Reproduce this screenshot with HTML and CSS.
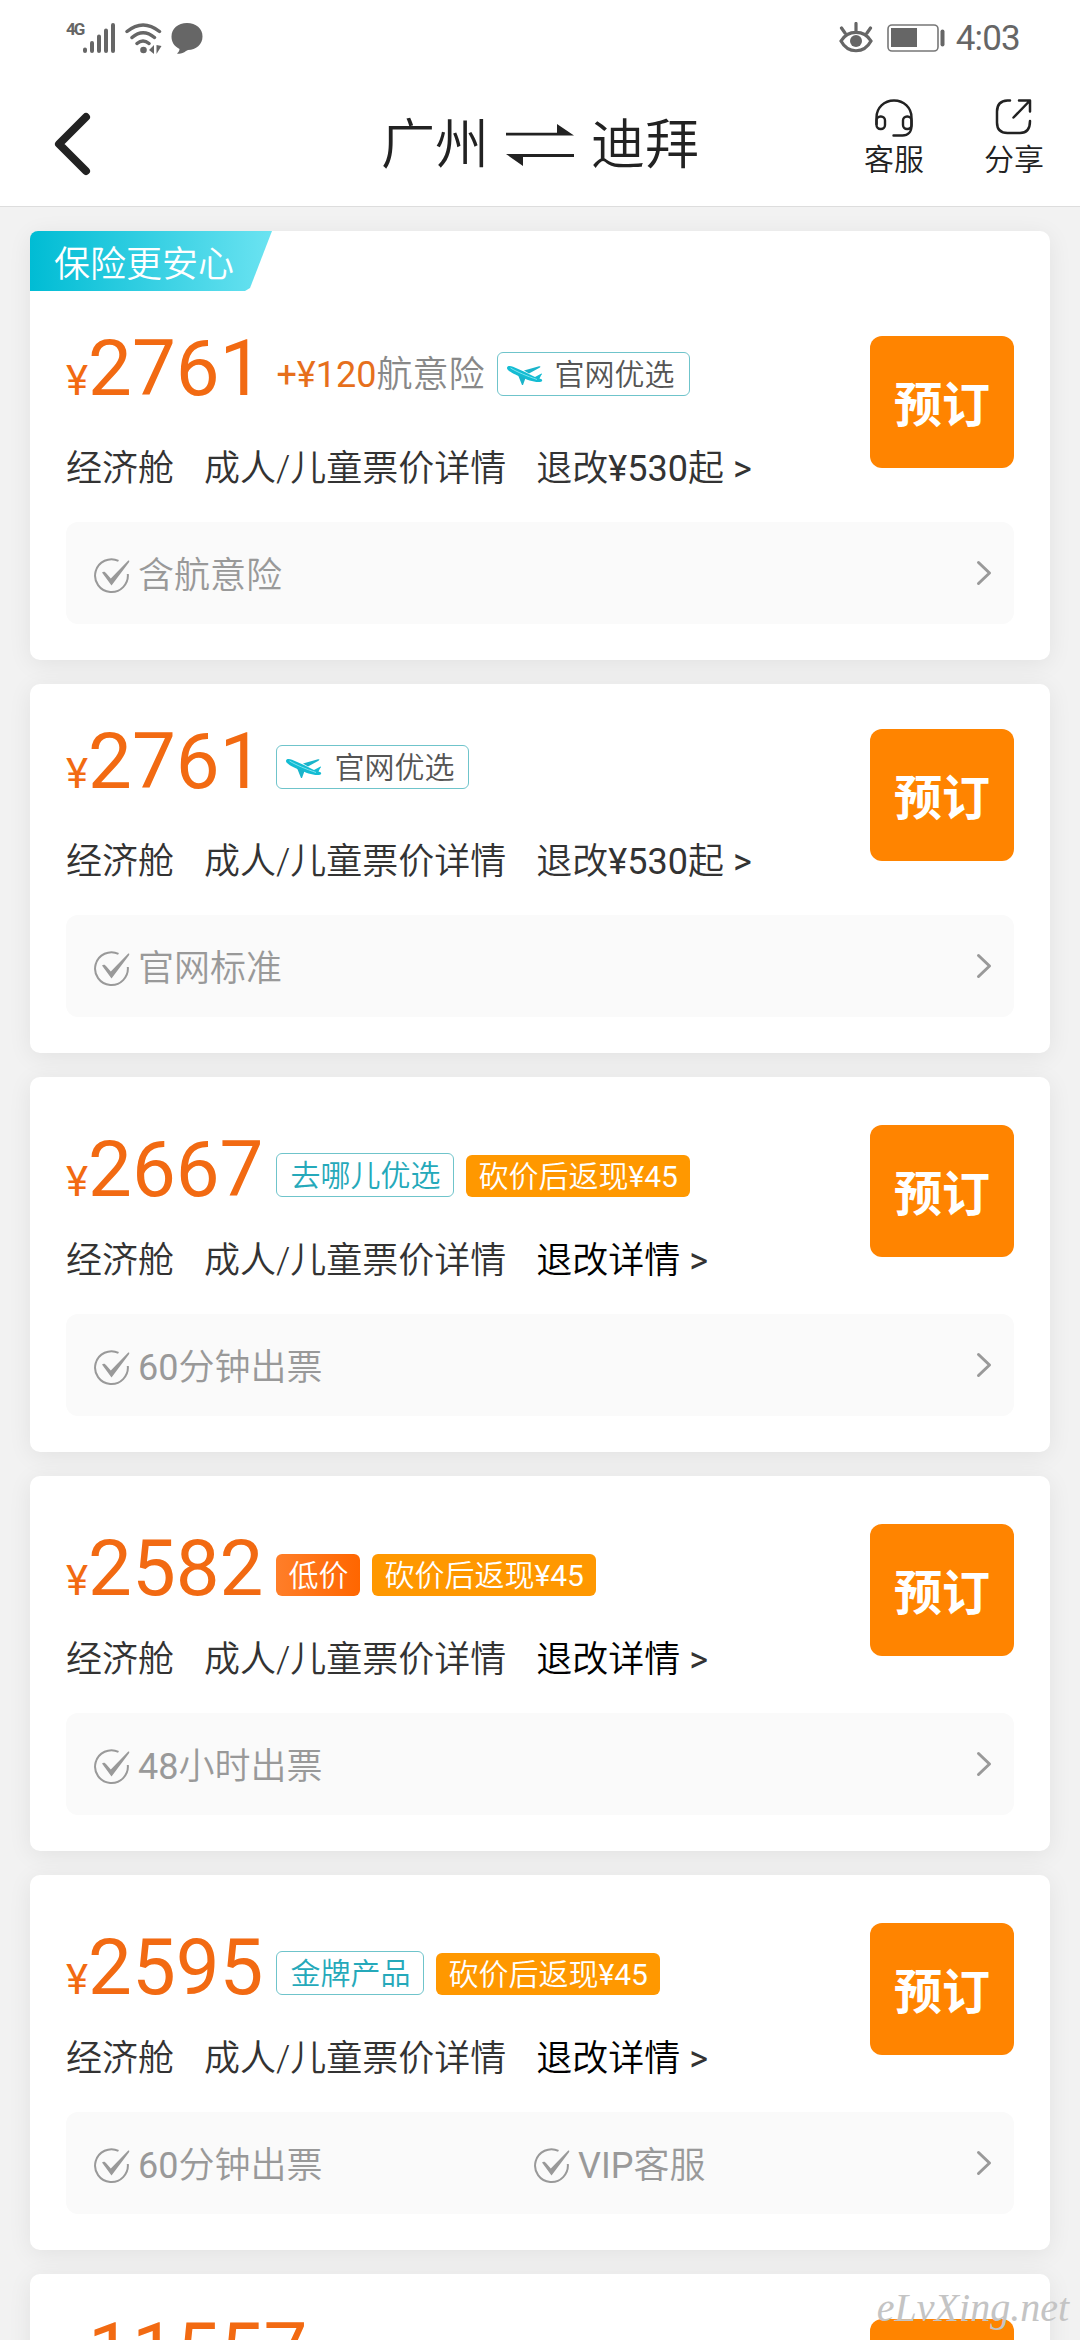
FILE: index.html
```html
<!DOCTYPE html>
<html lang="zh-CN">
  <head>
    <meta charset="UTF-8" />
    <meta name="viewport" content="width=device-width, initial-scale=1.0" />
    <title>广州 - 迪拜</title>
    <link rel="stylesheet" href="styles.css">
  </head>
  <body>
    <svg class="sprite" width="0" height="0">
      <symbol id="check" viewBox="0 0 36 36">
        <path d="M24.5 2.8A16.4 16.4 0 1 0 33.8 16" fill="none" stroke="currentColor" stroke-width="2" />
        <path d="M8 14.5c2-1.500 3.200-.5 4.200.8l4.600 5.200L34 2.700c1.200-.4 1.700.3 1 1.500L17.500 27.500z" fill="currentColor" />
      </symbol>
      <symbol id="next" viewBox="0 0 16 26">
        <path d="M2.500 2.500 13.500 13 2.500 23.500" fill="none" stroke="currentColor" stroke-width="3" stroke-linecap="round" stroke-linejoin="round" />
      </symbol>
      <symbol id="plane" viewBox="0 0 36 21">
        <path d="M0 3C0 .8 3 .6 6 1.800L18 7l10 5 6.500-3.500c1 .4.500 1-.5 2l-1.500 3 2 .8c1.200 1 .8 1.800-.5 2.500-6 1-14-2-20-4.800C8 9.500 0 6 0 3z" fill="#14bcd3" />
        <path d="M17 5.500 32 1.200c2-.3 1.800.8.5 1.500L22 8.500zM11 10l7.500 3-2.500 7h-1z" fill="#1ab4ca" />
        <path d="M3.500 3C10 7 20 11 30 14.500" fill="none" stroke="#7be3ef" stroke-width="1" />
      </symbol>
    </svg>

    <header class="header">
      <div class="status-bar">
        <div class="status-left">
          <span class="network">4G</span>
          <svg class="signal" width="32" height="30" viewBox="0 0 32 30">
            <path d="M2 26.500v1.500M9 20v8M16 13.500V28M23 7.500V28M30 2v26" stroke="#666" stroke-width="4" stroke-linecap="round" />
          </svg>
          <svg class="wifi" width="37" height="31" viewBox="0 0 37 31">
            <g fill="none" stroke="#666" stroke-width="3.500" stroke-linecap="round">
              <path d="M2 8.500Q18 -4.500 34.500 8.500M7 14.500Q18 5 29.500 14.500M12 20.500Q18 15.500 24 20.500" />
            </g>
            <circle cx="18.500" cy="27" r="3.300" fill="#666" />
            <path d="M24 27l5-5v9zM31.500 22v9l5-8z" fill="#666" />
          </svg>
          <svg class="bubble" width="32" height="31" viewBox="0 0 32 31">
            <path d="M16 0C25 0 31.500 5.500 31.500 13.500S25 27 17 27l-2 1c-3 2.500-6 3-9 2.500 1.500-1 2.500-3 2.500-4.500C3 23 .5 19 .5 13.500.5 5.500 7 0 16 0z" fill="#666" />
          </svg>
        </div>
        <div class="status-right">
          <svg width="34" height="32" viewBox="0 0 34 32">
            <path d="M2 19C9 7.500 25 7.500 32 19 25 32 9 32 2 19zM17 9V1.500M6 11 2.500 6M28 11l3.500-5" fill="none" stroke="#666" stroke-width="3.200" stroke-linecap="round" />
            <circle cx="17" cy="19" r="6" fill="#666" />
          </svg>
          <svg class="battery" width="58" height="28" viewBox="0 0 58 28">
            <rect x="1" y="1" width="50" height="26" rx="4" fill="none" stroke="#777" stroke-width="1.600" />
            <path d="M4 4h26v19H4z" fill="#666" />
            <rect x="53.500" y="5.500" width="4" height="17" rx="2" fill="#666" />
          </svg>
          <span class="time">4:03</span>
        </div>
      </div>

      <div class="nav-bar">
        <svg class="back" width="38" height="64" viewBox="0 0 38 64">
          <path d="M33 5 6 32l27 27" fill="none" stroke="#222" stroke-width="8" stroke-linecap="round" stroke-linejoin="round" />
        </svg>
        <h1 class="title">
          <span>广州</span>
          <svg width="68" height="42" viewBox="0 0 68 42">
            <path d="M0 8.700h51V0l17 11.500H0zM68 33H17v9L0 30h68z" fill="#222" />
          </svg>
          <span>迪拜</span>
        </h1>
        <div class="actions">
          <div class="action">
            <svg width="38" height="38" viewBox="0 0 38 38">
              <g fill="none" stroke="#222" stroke-width="2.400" stroke-linecap="round">
                <path d="M1.500 25v-6.500C1.500 9 9 1.500 19 1.500S36.500 9 36.500 18.500V27c0 6-3.500 9.500-9 9.500h-9" />
                <rect x="1.500" y="17.500" width="8.500" height="12.500" rx="4" />
                <rect x="28" y="17.500" width="8.500" height="12.500" rx="4" />
              </g>
            </svg>
            <span>客服</span>
          </div>
          <div class="action">
            <svg width="38" height="38" viewBox="0 0 38 38">
              <path d="M15 1.500h-2.500Q2 2 2 12.500v11Q2 34 12.500 34H25q10 0 10-12M24 1.500h11v11M34.500 2 18.500 18.500" fill="none" stroke="#222" stroke-width="2.500" stroke-linecap="round" stroke-linejoin="round" />
            </svg>
            <span>分享</span>
          </div>
        </div>
      </div>
    </header>

    <main class="list">
      <section class="card">
        <div class="ribbon">保险更安心</div>
        <div class="card-body">
          <div class="offer">
            <div class="info">
              <div class="price-row">
                <div class="price"><small>¥</small>2761</div>
                <div class="extra"><b>+¥120</b>航意险</div>
                <span class="tag tag-official"><svg width="36" height="21"><use href="#plane" /></svg>官网优选</span>
              </div>
              <div class="detail"><span>经济舱</span><span>成人/儿童票价详情</span><span>退改<i>¥530</i>起<i> &gt;</i></span></div>
            </div>
            <button class="book">预订</button>
          </div>
          <div class="features">
            <div class="feature"><svg width="36" height="36"><use href="#check" /></svg>含航意险</div>
            <svg class="next" width="16" height="26"><use href="#next" /></svg>
          </div>
        </div>
      </section>

      <section class="card">
        <div class="card-body">
          <div class="offer">
            <div class="info">
              <div class="price-row">
                <div class="price"><small>¥</small>2761</div>
                <span class="tag tag-official"><svg width="36" height="21"><use href="#plane" /></svg>官网优选</span>
              </div>
              <div class="detail"><span>经济舱</span><span>成人/儿童票价详情</span><span>退改<i>¥530</i>起<i> &gt;</i></span></div>
            </div>
            <button class="book">预订</button>
          </div>
          <div class="features">
            <div class="feature"><svg width="36" height="36"><use href="#check" /></svg>官网标准</div>
            <svg class="next" width="16" height="26"><use href="#next" /></svg>
          </div>
        </div>
      </section>

      <section class="card card-promo">
        <div class="card-body">
          <div class="offer">
            <div class="info">
              <div class="price-row">
                <div class="price"><small>¥</small>2667</div>
                <span class="tag tag-line">去哪儿优选</span>
                <span class="tag tag-cash">砍价后返现<i>¥45</i></span>
              </div>
              <div class="detail"><span>经济舱</span><span>成人/儿童票价详情</span><span><em>退改详情</em><i> &gt;</i></span></div>
            </div>
            <button class="book">预订</button>
          </div>
          <div class="features">
            <div class="feature"><svg width="36" height="36"><use href="#check" /></svg><i>60</i>分钟出票</div>
            <svg class="next" width="16" height="26"><use href="#next" /></svg>
          </div>
        </div>
      </section>

      <section class="card card-promo">
        <div class="card-body">
          <div class="offer">
            <div class="info">
              <div class="price-row">
                <div class="price"><small>¥</small>2582</div>
                <span class="tag tag-low">低价</span>
                <span class="tag tag-cash">砍价后返现<i>¥45</i></span>
              </div>
              <div class="detail"><span>经济舱</span><span>成人/儿童票价详情</span><span><em>退改详情</em><i> &gt;</i></span></div>
            </div>
            <button class="book">预订</button>
          </div>
          <div class="features">
            <div class="feature"><svg width="36" height="36"><use href="#check" /></svg><i>48</i>小时出票</div>
            <svg class="next" width="16" height="26"><use href="#next" /></svg>
          </div>
        </div>
      </section>

      <section class="card card-promo">
        <div class="card-body">
          <div class="offer">
            <div class="info">
              <div class="price-row">
                <div class="price"><small>¥</small>2595</div>
                <span class="tag tag-line">金牌产品</span>
                <span class="tag tag-cash">砍价后返现<i>¥45</i></span>
              </div>
              <div class="detail"><span>经济舱</span><span>成人/儿童票价详情</span><span><em>退改详情</em><i> &gt;</i></span></div>
            </div>
            <button class="book">预订</button>
          </div>
          <div class="features">
            <div class="feature"><svg width="36" height="36"><use href="#check" /></svg><i>60</i>分钟出票</div>
            <div class="feature"><svg width="36" height="36"><use href="#check" /></svg><i>VIP</i>客服</div>
            <svg class="next" width="16" height="26"><use href="#next" /></svg>
          </div>
        </div>
      </section>

      <section class="card">
        <div class="card-body">
          <div class="offer">
            <div class="info">
              <div class="price-row">
                <div class="price"><small>¥</small>11557</div>
              </div>
            </div>
            <button class="book"></button>
          </div>
        </div>
      </section>
    </main>

    <div class="watermark">eLvXing.net</div>
  </body>
</html>
```

FILE: styles.css
```css
* {
  box-sizing: border-box;
}
body {
  margin: 0;
  width: 1080px;
  height: 2340px;
  overflow: hidden;
  position: relative;
  background-color: #f2f2f2;
  color: #333;
  font-family: Roboto, "Noto Sans CJK SC", sans-serif;
  font-weight: 350;
}
svg {
  display: block;
  flex-shrink: 0;
}
.sprite {
  position: absolute;
}
i {
  font-style: normal;
  font-weight: 400;
  white-space: pre;
}
em {
  font-style: normal;
  color: #000;
}

/* header */
.header {
  height: 207px;
  background-color: #fff;
  border-bottom: 1px solid #ddd;
}
.status-bar {
  height: 76px;
  display: flex;
  justify-content: space-between;
  padding: 0 60px 0 66px;
  color: #666;
}
.status-left,
.status-right {
  display: flex;
  align-items: center;
}
.network {
  width: 17px;
  font-size: 17px;
  font-weight: 700;
  line-height: 16px;
  letter-spacing: -2px;
  margin-bottom: 18px;
}
.wifi {
  margin-left: 10px;
}
.bubble {
  margin-left: 9px;
}
.battery {
  margin: 0 11px 0 14px;
}
.time {
  font-size: 35px;
  font-weight: 400;
  letter-spacing: -0.8px;
}
.nav-bar {
  height: 130px;
  display: grid;
  grid-template-columns: 1fr auto 1fr;
  align-items: center;
  padding: 0 36px 0 53px;
  color: #222;
}
.back {
  margin-top: 5px;
}
.title {
  display: flex;
  align-items: center;
  gap: 17px;
  margin: 10px 8px 0 -9px;
  font-size: 54px;
  font-weight: 350;
  line-height: 80px;
}
.title svg {
  margin-bottom: 2px;
}
.actions {
  display: flex;
  justify-content: flex-end;
  gap: 60px;
}
.action {
  display: flex;
  flex-direction: column;
  align-items: center;
  width: 60px;
  font-size: 30px;
  line-height: 42px;
  gap: 2px;
  padding-bottom: 2px;
}

/* cards */
.list {
  display: flex;
  flex-direction: column;
  gap: 24px;
  padding: 24px 30px 0;
}
.card {
  background-color: #fff;
  border-radius: 10px;
  box-shadow: 0 4px 24px rgba(0, 0, 0, 0.07);
}
.card-body {
  padding: 45px 36px 36px;
}
.card-promo .card-body {
  padding-top: 48px;
}
.ribbon {
  width: 242px;
  height: 60px;
  padding-left: 24px;
  border-radius: 8px 0 0 0;
  background: linear-gradient(90deg, #00bcd4, #6be3f1);
  clip-path: polygon(0 0, 100% 0, 220px 57px, 215px 100%, 0 100%);
  color: #fff;
  font-size: 36px;
  line-height: 68px;
}
.offer {
  display: flex;
  justify-content: space-between;
  align-items: flex-start;
}
.card-promo .info {
  padding-top: 12px;
}
.price-row {
  display: flex;
  align-items: flex-end;
  gap: 12px;
  height: 60px;
}
.price {
  height: 58px;
  margin-right: 1px;
  color: #f26a12;
  font-size: 78px;
  font-weight: 400;
  line-height: 62px;
}
.price small {
  font-size: 42px;
}
.extra {
  color: #888;
  font-size: 36px;
  line-height: 42px;
}
.extra b {
  color: #e66f1c;
  font-weight: 400;
}
.tag {
  display: flex;
  align-items: center;
  height: 42px;
  padding: 2px 12px 0;
  border-radius: 6px;
  font-size: 30px;
  line-height: 40px;
}
.tag-official,
.tag-line {
  height: 44px;
  padding: 2px 13px 0;
  border: 1px solid #6fc4cb;
  color: #25a9ba;
}
.tag-official {
  padding: 2px 14px 0 9px;
  gap: 12px;
  color: #555;
}
.tag-cash {
  background-color: #ff9800;
  color: #fff;
}
.tag-low {
  background: linear-gradient(90deg, #ff7e29, #ff6600);
  color: #fff;
}
.detail {
  display: flex;
  gap: 30px;
  margin-top: 48px;
  padding-top: 2px;
  font-size: 36px;
  line-height: 46px;
}
.card-promo .detail {
  margin-top: 39px;
}
.book {
  width: 144px;
  height: 132px;
  padding: 0 0 3px;
  border: none;
  border-radius: 12px;
  background-color: #ff8400;
  color: #fff;
  font-family: inherit;
  font-size: 48px;
  font-weight: 700;
}
.features {
  display: flex;
  align-items: center;
  height: 102px;
  margin-top: 30px;
  padding: 0 22px 0 28px;
  border-radius: 12px;
  background-color: #fafafa;
  color: #999;
}
.feature {
  display: flex;
  align-items: center;
  width: 440px;
  padding-top: 6px;
  font-size: 36px;
  line-height: 50px;
}
.feature svg {
  margin-right: 8px;
}
.next {
  margin-left: auto;
}

.watermark {
  position: absolute;
  right: 11px;
  bottom: 8px;
  color: #c4c4c4;
  font-family: "Liberation Serif", serif;
  font-size: 40px;
  font-style: italic;
  font-weight: 400;
  line-height: 48px;
}
```
